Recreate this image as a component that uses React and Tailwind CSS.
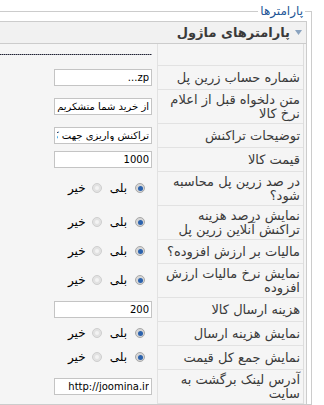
import React from "react";

const rows = [
  { label: null, type: "hr" },
  { label: ["شماره حساب زرین پل"], type: "input", value: "zp..." },
  { label: ["متن دلخواه قبل از اعلام", "نرخ کالا"], type: "input", value: "از خرید شما متشکریم" },
  { label: ["توضیحات تراکنش"], type: "input", value: "تراکنش واریزی جهت کد" },
  { label: ["قیمت کالا"], type: "input", value: "1000" },
  { label: ["در صد زرین پل محاسبه", "شود؟"], type: "radio" },
  { label: ["نمایش درصد هزینه", "تراکنش آنلاین زرین پل"], type: "radio" },
  { label: ["مالیات بر ارزش افزوده؟"], type: "radio" },
  { label: ["نمایش نرخ مالیات ارزش", "افزوده"], type: "radio" },
  { label: ["هزینه ارسال کالا"], type: "input", value: "200" },
  { label: ["نمایش هزینه ارسال"], type: "radio" },
  { label: ["نمایش جمع کل قیمت"], type: "radio" },
  { label: ["آدرس لینک برگشت به", "سایت"], type: "input", value: "http://joomina.ir" },
];

function Radio({ on }) {
  return on ? (
    <span className="flex h-[10px] w-[10px] items-center justify-center rounded-full border border-[#a9a9a9] bg-[#d6d6d6]">
      <span className="h-[5px] w-[5px] rounded-full bg-[#2b62ad]" />
    </span>
  ) : (
    <span className="flex h-[10px] w-[10px] items-center justify-center rounded-full border border-[#cfcfcf] bg-[#e2e2e2]">
      <span className="h-[4px] w-[4px] rounded-full bg-[#f3f3f3]" />
    </span>
  );
}

function Value({ row }) {
  if (row.type === "hr") {
    return (
      <div className="h-px w-full bg-[repeating-linear-gradient(90deg,#22232e_0_1px,#8d8fa0_1px_2px)]" />
    );
  }
  if (row.type === "input") {
    return (
      <input
        readOnly
        dir="rtl"
        value={row.value}
        className="h-[17px] w-[98px] border border-[#c4c4c4] bg-white px-[2px] text-[10px] text-black outline-none"
      />
    );
  }
  return (
    <div className="flex items-center text-[12px] text-black">
      <span className="mr-[7px]">
        <Radio on />
      </span>
      <span className="mr-[8px]">بلی</span>
      <span className="mr-[8px]">
        <Radio />
      </span>
      <span className="mr-[6px]">خیر</span>
    </div>
  );
}

export default function App() {
  return (
    <div
      dir="rtl"
      className="h-[405px] w-[324px] overflow-hidden bg-white font-['DejaVu_Sans',sans-serif]"
    >
      <fieldset className="-ml-[20px] mr-[12px] mt-[3px] border border-[#cccccc] pr-[4px]">
        <legend className="mr-[2px] px-[2px] text-[12px] leading-[16px] text-[#1d5596]">
          پارامترها
        </legend>

        <div className="mt-[2px] border border-b-0 border-[#cccccc]">
          <div className="flex h-[22px] items-center gap-[5px] border-b border-[#cccccc] bg-[#f1f1f1] pr-[4px]">
            <svg width="7" height="5" viewBox="0 0 7 5">
              <path d="M0 0h7L3.5 5z" fill="#8aa3bf" />
            </svg>
            <span className="text-[13px] font-bold text-[#3a3a3a]">پارامترهای ماژول</span>
          </div>

          <div className="bg-[#f5f5f5] pr-[2px]">
            <div className="border-r border-[#dddddd]">
              {rows.map((row, i) => (
                <div
                  key={i}
                  className={[
                    "grid grid-cols-[146px_1fr]",
                    i === 0 ? "h-[21px]" : row.label.length > 1 ? "h-[34px]" : "h-[24px]",
                  ].join(" ")}
                >
                  <div
                    className={[
                      "flex flex-col justify-center border-l border-[#e2e2e2] px-[3px] text-[13px] leading-[14px] text-[#3a3a3a]",
                      i > 0 ? "border-t" : "",
                    ].join(" ")}
                  >
                    {row.label &&
                      row.label.map((l, j) => (
                        <div key={j} className="whitespace-nowrap">
                          {l}
                        </div>
                      ))}
                  </div>
                  <div className="flex items-center pr-[5px]">
                    <Value row={row} />
                  </div>
                </div>
              ))}
              <div className="w-[146px] border-t border-[#e2e2e2]" />
            </div>
          </div>
        </div>
      </fieldset>
    </div>
  );
}
